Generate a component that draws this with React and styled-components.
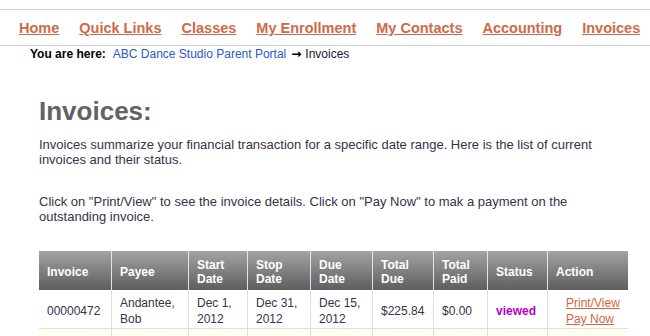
import React from 'react';
import styled, { createGlobalStyle } from 'styled-components';

const navLinks = ['Home', 'Quick Links', 'Classes', 'My Enrollment', 'My Contacts', 'Accounting', 'Invoices'];

const columns = [
	{ label: 'Invoice', width: 73 },
	{ label: 'Payee', width: 77 },
	{ label: ['Start', 'Date'], width: 59 },
	{ label: ['Stop', 'Date'], width: 63 },
	{ label: ['Due', 'Date'], width: 62 },
	{ label: ['Total', 'Due'], width: 61 },
	{ label: ['Total', 'Paid'], width: 54 },
	{ label: 'Status', width: 60 },
	{ label: 'Action', width: 80 },
];

const invoices = [
	{
		id: '00000472',
		payee: ['Andantee,', 'Bob'],
		start: ['Dec 1,', '2012'],
		stop: ['Dec 31,', '2012'],
		due: ['Dec 15,', '2012'],
		totalDue: '$225.84',
		totalPaid: '$0.00',
		status: 'viewed',
	},
	{
		id: '00000458',
		payee: ['Andantee,', 'Bob'],
		start: ['Nov 1,', '2012'],
		stop: ['Nov 30,', '2012'],
		due: ['Nov 15,', '2012'],
		totalDue: '$225.84',
		totalPaid: '$225.84',
		status: 'paid',
	},
];

const Lines = ({ value }) =>
	Array.isArray(value) ? (
		<>
			{value[0]}
			<br />
			{value[1]}
		</>
	) : (
		value
	);

const App = () => {
	return (
		<>
			<GlobalStyle />
			<Nav>
				{navLinks.map((link) => (
					<NavLink key={link} href="#">
						{link}
					</NavLink>
				))}
			</Nav>
			<Breadcrumb>
				<strong>You are here:</strong>
				<CrumbLink href="#">ABC Dance Studio Parent Portal</CrumbLink>
				<Arrow>→</Arrow>
				<Current>Invoices</Current>
			</Breadcrumb>
			<Content>
				<Title>Invoices:</Title>
				<Text>
					Invoices summarize your financial transaction for a specific date range. Here is the list of
					current invoices and their status.
				</Text>
				<Text>
					Click on "Print/View" to see the invoice details. Click on "Pay Now" to mak a payment on the
					outstanding invoice.
				</Text>
				<Table>
					<colgroup>
						{columns.map((col, i) => (
							<col key={i} style={{ width: col.width }} />
						))}
					</colgroup>
					<thead>
						<tr>
							{columns.map((col, i) => (
								<Th key={i}>
									<Lines value={col.label} />
								</Th>
							))}
						</tr>
					</thead>
					<tbody>
						{invoices.map((inv, i) => (
							<Row key={inv.id} $alt={i % 2 === 1}>
								<Td>{inv.id}</Td>
								<Td>
									<Lines value={inv.payee} />
								</Td>
								<Td>
									<Lines value={inv.start} />
								</Td>
								<Td>
									<Lines value={inv.stop} />
								</Td>
								<Td>
									<Lines value={inv.due} />
								</Td>
								<Td>{inv.totalDue}</Td>
								<Td>{inv.totalPaid}</Td>
								<Td>
									<Status>{inv.status}</Status>
								</Td>
								<Td>
									<Actions>
										<ActionLink href="#">Print/View</ActionLink>
										<ActionLink href="#">Pay Now</ActionLink>
									</Actions>
								</Td>
							</Row>
						))}
					</tbody>
				</Table>
			</Content>
		</>
	);
};

const GlobalStyle = createGlobalStyle`
	body {
		margin: 0;
		background: #fff;
		font-family: "Liberation Sans", Arial, sans-serif;
		color: #3b3049;
	}
`;

const Nav = styled.nav`
	display: flex;
	gap: 20px;
	margin-top: 9px;
	padding: 10px 0 9px 19px;
	border-top: 1px solid #cfcfcf;
	border-bottom: 1px solid #cfcfcf;
`;

const NavLink = styled.a`
	font-size: 14.5px;
	line-height: 16px;
	font-weight: bold;
	color: #cf6a48;
	text-decoration: underline;
	white-space: nowrap;
`;

const Breadcrumb = styled.div`
	display: flex;
	align-items: baseline;
	margin-top: 1px;
	padding-left: 30px;
	font-size: 12px;
	line-height: 14px;
	color: #000;
`;

const CrumbLink = styled.a`
	margin-left: 7px;
	color: #2b57c9;
	text-decoration: none;
`;

const Arrow = styled.span`
	margin: 0 4px 0 5px;
	font-family: "DejaVu Sans", sans-serif;
	font-size: 12px;
	font-weight: bold;
	color: #000;
`;

const Current = styled.span`
	color: #1d0f3a;
`;

const Content = styled.main`
	width: 589px;
	padding: 35px 0 0 39px;
`;

const Title = styled.h1`
	margin: 0 0 11px;
	font-size: 26px;
	line-height: 30px;
	font-weight: bold;
	color: #626262;
`;

const Text = styled.p`
	margin: 0 0 27px;
	font-size: 13px;
	line-height: 15px;
`;

const Table = styled.table`
	width: 589px;
	table-layout: fixed;
	border-collapse: separate;
	border-spacing: 0;
	font-size: 12px;
`;

const Th = styled.th`
	height: 39px;
	padding: 2px 8px 0;
	box-sizing: border-box;
	text-align: left;
	vertical-align: middle;
	line-height: 14px;
	font-weight: bold;
	color: #fff;
	background: linear-gradient(#a3a3a3, #5e5e5e);
	border-right: 1px solid #e4e4e4;

	&:last-child {
		border-right: none;
	}
`;

const Row = styled.tr`
	background: ${(p) => (p.$alt ? '#ffffef' : '#fff')};
`;

const Td = styled.td`
	height: 39px;
	padding: 4px 8px 0;
	box-sizing: border-box;
	vertical-align: middle;
	line-height: 16px;
	color: #3b3049;
	border-right: 1px solid #dedede;
	border-bottom: 1px solid #dedede;

	&:last-child {
		border-right: none;
	}
`;

const Status = styled.span`
	font-weight: bold;
	color: #b000c8;
`;

const Actions = styled.div`
	display: flex;
	flex-direction: column;
	align-items: flex-start;
	padding-left: 10px;
`;

const ActionLink = styled.a`
	color: #d2653f;
	text-decoration: underline;
`;

export default App;
